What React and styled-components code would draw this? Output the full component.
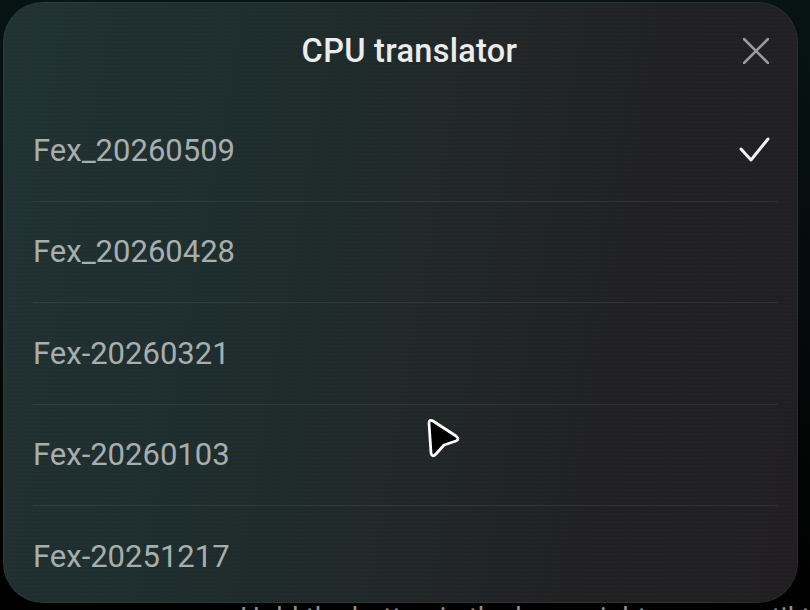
import React from 'react';
import styled, { createGlobalStyle } from 'styled-components';

const GlobalStyle = createGlobalStyle`
    html, body {
        margin: 0;
        padding: 0;
        width: 810px;
        height: 610px;
        overflow: hidden;
        background: linear-gradient(180deg, #071414 0%, #050808 60%, #000 100%);
        font-family: Roboto, "Noto Sans", sans-serif;
    }
`;

// 전체 화면
const Screen = styled.div`
    position: relative;
    width: 810px;
    height: 610px;
    display: flex;
    flex-direction: column;
    overflow: hidden;
`;

// 모달 패널
const Panel = styled.div`
    margin: 2px 12px 0 3px;
    height: 601px;
    flex-shrink: 0;
    border-radius: 40px;
    overflow: hidden;
    display: flex;
    flex-direction: column;
    background:
        repeating-linear-gradient(180deg, rgba(255,255,255,0.012) 0px, rgba(255,255,255,0.012) 1px, transparent 1px, transparent 4px),
        linear-gradient(100deg, #213232 0%, #1e2d2d 30%, #212728 55%, #212124 75%, #201e21 100%);
    box-shadow: inset 0 0 0 1px rgba(255, 255, 255, 0.05);
`;

// 헤더
const Header = styled.div`
    height: 98px;
    flex-shrink: 0;
    display: grid;
    grid-template-columns: 1fr auto 1fr;
    align-items: center;
    padding: 0 28px 0 30px;
`;

const Title = styled.div`
    grid-column: 2;
    font-size: 32.5px;
    font-weight: 500;
    color: #ececec;
    letter-spacing: 0.3px;
    padding-left: 16px;
`;

const CloseButton = styled.div`
    grid-column: 3;
    justify-self: end;
    width: 28px;
    height: 28px;
    display: flex;
    align-items: center;
    justify-content: center;
`;

const List = styled.div`
    display: flex;
    flex-direction: column;
    flex-shrink: 0;
    padding: 0 20px 0 30px;
`;

const Row = styled.div`
    height: 101.5px;
    flex-shrink: 0;
    display: flex;
    align-items: center;
    justify-content: space-between;
    box-sizing: border-box;
    border-bottom: ${p => (p.$last ? 'none' : '1px solid rgba(255, 255, 255, 0.07)')};
    padding-right: 8px;
`;

const RowLabel = styled.span`
    font-size: 31px;
    color: #a7aeae;
`;

// 패널 아래 보이는 페이지 글자
const BackText = styled.div`
    padding-left: 240px;
    font-size: 28px;
    line-height: 30px;
    color: #8f8f8f;
    white-space: nowrap;
`;

const Pointer = styled.svg`
    position: absolute;
    left: 424px;
    top: 416px;
`;

const items = ['Fex_20260509', 'Fex_20260428', 'Fex-20260321', 'Fex-20260103', 'Fex-20251217'];

export default function App() {
    return (
        <>
            <GlobalStyle />
            <Screen>
                <Panel>
                    <Header>
                        <Title>CPU translator</Title>
                        <CloseButton>
                            <svg width="26" height="26" viewBox="0 0 26 26">
                                <path d="M1 1 L25 25 M25 1 L1 25" stroke="#9b9b9b" strokeWidth="2.6" strokeLinecap="round" />
                            </svg>
                        </CloseButton>
                    </Header>
                    <List>
                        {items.map((name, i) => (
                            <Row key={name} $last={i === items.length - 1}>
                                <RowLabel>{name}</RowLabel>
                                {i === 0 && (
                                    <svg width="32" height="28" viewBox="0 0 32 28">
                                        <path d="M3 13 L13 24 L30 3" fill="none" stroke="#f2f2f2" strokeWidth="3" strokeLinecap="round" strokeLinejoin="round" />
                                    </svg>
                                )}
                            </Row>
                        ))}
                    </List>
                </Panel>
                <BackText>Hold the button in the lower right corner until the prompt to make sure to</BackText>
                <Pointer width="40" height="44" viewBox="0 0 40 44">
                    <path d="M5 7 Q5 3 9 5 L32 20 Q36 23 32 25 L20 29 L12 38 Q8 42 7 37 Z" fill="#000" stroke="#fff" strokeWidth="2.8" strokeLinejoin="round" />
                </Pointer>
            </Screen>
        </>
    );
}
